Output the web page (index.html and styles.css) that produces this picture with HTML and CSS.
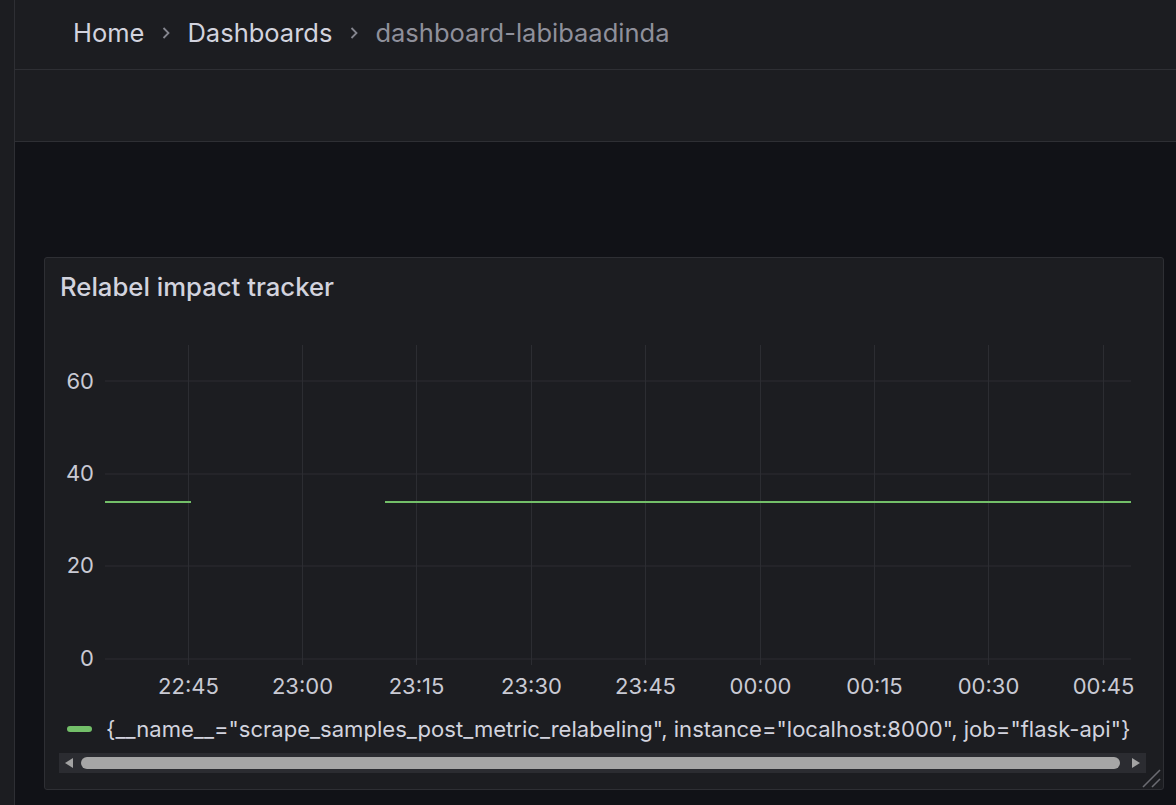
FILE: index.html
```html
<!DOCTYPE html>
<html lang="en">
<head>
<meta charset="utf-8">
<title>dashboard-labibaadinda</title>
<link rel="stylesheet" href="styles.css">
</head>
<body>
<div class="app">
  <aside class="sidebar"></aside>
  <div class="main">
    <header class="topbar">
      <nav class="crumbs">
        <span class="crumb">Home</span>
        <svg class="chev" width="8" height="12" viewBox="0 0 8 12"><polyline points="1.5,1 6.5,6 1.5,11" fill="none" stroke="currentColor" stroke-width="1.8"/></svg>
        <span class="crumb">Dashboards</span>
        <svg class="chev" width="8" height="12" viewBox="0 0 8 12"><polyline points="1.5,1 6.5,6 1.5,11" fill="none" stroke="currentColor" stroke-width="1.8"/></svg>
        <span class="crumb current">dashboard-labibaadinda</span>
      </nav>
    </header>
    <div class="toolbar"></div>
    <div class="canvas">
      <section class="panel">
        <div class="panel-header">
          <h2 class="panel-title">Relabel impact tracker</h2>
        </div>
        <svg class="chart" width="1118" height="398" viewBox="0 0 1118 398">
          <g class="grid">
            <line x1="60" y1="67" x2="1086" y2="67"/>
            <line x1="60" y1="160" x2="1086" y2="160"/>
            <line x1="60" y1="252" x2="1086" y2="252"/>
            <line x1="60" y1="345" x2="1086" y2="345"/>
            <line x1="143.5" y1="31" x2="143.5" y2="351"/>
            <line x1="257.5" y1="31" x2="257.5" y2="351"/>
            <line x1="371.5" y1="31" x2="371.5" y2="351"/>
            <line x1="486.5" y1="31" x2="486.5" y2="351"/>
            <line x1="600.5" y1="31" x2="600.5" y2="351"/>
            <line x1="715.5" y1="31" x2="715.5" y2="351"/>
            <line x1="829.5" y1="31" x2="829.5" y2="351"/>
            <line x1="943.5" y1="31" x2="943.5" y2="351"/>
            <line x1="1058.5" y1="31" x2="1058.5" y2="351"/>
          </g>
          <g class="ylabels">
            <text x="49" y="67">60</text>
            <text x="49" y="159">40</text>
            <text x="49" y="251">20</text>
            <text x="49" y="344">0</text>
          </g>
          <g class="xlabels">
            <text x="143.5" y="372">22:45</text>
            <text x="257.5" y="372">23:00</text>
            <text x="371.5" y="372">23:15</text>
            <text x="486.5" y="372">23:30</text>
            <text x="600.5" y="372">23:45</text>
            <text x="715.5" y="372">00:00</text>
            <text x="829.5" y="372">00:15</text>
            <text x="943.5" y="372">00:30</text>
            <text x="1058.5" y="372">00:45</text>
          </g>
          <g class="series">
            <line x1="60" y1="188" x2="146" y2="188"/>
            <line x1="340" y1="188" x2="1086" y2="188"/>
          </g>
        </svg>
        <div class="legend">
          <div class="legend-item">
            <span class="swatch"></span>
            <span class="legend-label">{__name__="scrape_samples_post_metric_relabeling", instance="localhost:8000", job="flask-api"}</span>
          </div>
        </div>
        <div class="hscroll">
          <span class="arrow left"></span>
          <span class="thumb"></span>
          <span class="arrow right"></span>
        </div>
        <svg class="resize" width="20" height="20" viewBox="0 0 20 20"><line x1="1" y1="18" x2="18" y2="1"/><line x1="10" y1="18" x2="18" y2="10"/></svg>
      </section>
    </div>
  </div>
</div>
</body>
</html>
```

FILE: styles.css
```css
* { box-sizing: border-box; }
html, body { margin: 0; padding: 0; }
body {
  background: #111217;
  font-family: Inter, "Noto Sans", sans-serif;
  color: #ccccdc;
  width: 1176px;
  height: 805px;
  overflow: hidden;
}
.app {
  display: flex;
  height: 805px;
}
.sidebar {
  width: 15px;
  flex: none;
  background: #1c1d21;
  border-right: 1px solid #2e2f34;
}
.main {
  flex: 1;
  display: flex;
  flex-direction: column;
  min-width: 0;
}
.topbar {
  height: 70px;
  flex: none;
  background: #1c1d21;
  border-bottom: 1px solid #2e2f34;
  display: flex;
  align-items: center;
  padding-left: 58px;
}
.crumbs {
  display: flex;
  align-items: center;
  gap: 17.5px;
  font-size: 25.5px;
  line-height: 1;
  margin-top: -3px;
}
.crumb { color: #d2d3de; }
.crumb.current { color: #8f909b; }
.chev { color: #85868f; display: block; }
.toolbar {
  height: 72px;
  flex: none;
  background: #1c1d21;
  border-bottom: 1px solid #2e2f34;
}
.canvas {
  flex: 1;
  padding: 115px 12px 0 29px;
  background: #111217;
}
.panel {
  position: relative;
  height: 533px;
  background: #1c1d21;
  border: 1px solid #2e2f34;
  border-radius: 3px;
  display: flex;
  flex-direction: column;
}
.panel-header {
  height: 56px;
  flex: none;
  display: flex;
  align-items: center;
  padding-left: 15px;
}
.panel-title {
  margin: 0;
  font-size: 25.7px;
  font-weight: 500;
  color: #d2d3de;
  line-height: 1;
  margin-top: 2px;
}
.chart { display: block; flex: none; }
.grid line { stroke: #2c2d32; stroke-width: 1; }
.ylabels text {
  fill: #c9cad4;
  font-size: 22px;
  text-anchor: end;
  dominant-baseline: central;
  font-family: Inter, sans-serif;
}
.xlabels text {
  fill: #c9cad4;
  font-size: 22px;
  text-anchor: middle;
  dominant-baseline: central;
  font-family: Inter, sans-serif;
}
.series line { stroke: #73bf69; stroke-width: 2; }
.legend {
  height: 34px;
  flex: none;
  padding: 0 17px 0 14px;
  display: flex;
  align-items: center;
  overflow: hidden;
}
.legend-item {
  display: flex;
  align-items: center;
  gap: 14px;
  padding-left: 8px;
  white-space: nowrap;
}
.swatch {
  width: 25px;
  height: 6px;
  border-radius: 3px;
  background: #73bf69;
  flex: none;
}
.legend-label {
  font-size: 22.05px;
  color: #d2d3de;
  line-height: 1;
}
.hscroll {
  margin: 7px 17px 0 14px;
  height: 20px;
  flex: none;
  background: #2b2c31;
  display: flex;
  align-items: center;
  padding: 0 6px;
  gap: 8px;
}
.arrow {
  width: 0;
  height: 0;
  border-top: 5px solid transparent;
  border-bottom: 5px solid transparent;
  flex: none;
}
.arrow.left { border-right: 8px solid #a3a3a3; }
.arrow.right { border-left: 8px solid #a3a3a3; margin-left: 4px; }
.thumb {
  flex: 1;
  height: 12px;
  border-radius: 6px;
  background: #a6a6a6;
}
.resize {
  position: absolute;
  right: 1px;
  bottom: 0;
}
.resize line { stroke: #6b6c72; stroke-width: 1.6; }
```
